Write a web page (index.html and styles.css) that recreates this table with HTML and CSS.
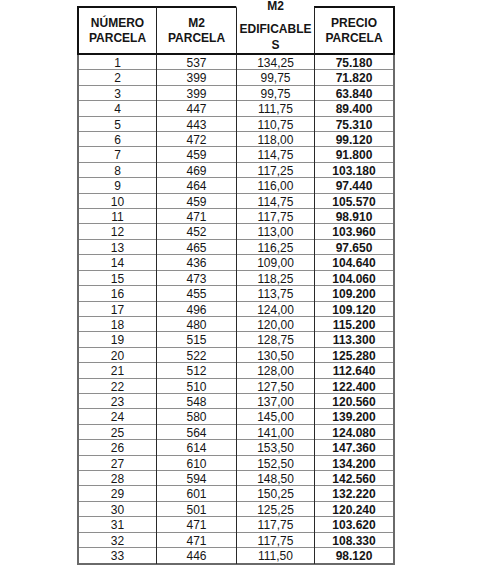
FILE: index.html
```html
<!DOCTYPE html>
<html lang="es">
<head>
<meta charset="utf-8">
<title>Parcelas</title>
<link rel="stylesheet" href="styles.css">
</head>
<body>
<div class="sheet">
  <div class="head">
    <div class="hcell c1"><span>NÚMERO</span><span>PARCELA</span></div>
    <div class="hcell c2"><span>M2</span><span>PARCELA</span></div>
    <div class="hcell c3"><span class="l1">M2</span><span class="l2">EDIFICABLE</span><span class="l3">S</span></div>
    <div class="hcell c4"><span>PRECIO</span><span>PARCELA</span></div>
  </div>
  <div class="body">
    <div class="row"><div>1</div><div>537</div><div>134,25</div><div class="b">75.180</div></div>
    <div class="row"><div>2</div><div>399</div><div>99,75</div><div class="b">71.820</div></div>
    <div class="row"><div>3</div><div>399</div><div>99,75</div><div class="b">63.840</div></div>
    <div class="row"><div>4</div><div>447</div><div>111,75</div><div class="b">89.400</div></div>
    <div class="row"><div>5</div><div>443</div><div>110,75</div><div class="b">75.310</div></div>
    <div class="row"><div>6</div><div>472</div><div>118,00</div><div class="b">99.120</div></div>
    <div class="row"><div>7</div><div>459</div><div>114,75</div><div class="b">91.800</div></div>
    <div class="row"><div>8</div><div>469</div><div>117,25</div><div class="b">103.180</div></div>
    <div class="row"><div>9</div><div>464</div><div>116,00</div><div class="b">97.440</div></div>
    <div class="row"><div>10</div><div>459</div><div>114,75</div><div class="b">105.570</div></div>
    <div class="row"><div>11</div><div>471</div><div>117,75</div><div class="b">98.910</div></div>
    <div class="row"><div>12</div><div>452</div><div>113,00</div><div class="b">103.960</div></div>
    <div class="row"><div>13</div><div>465</div><div>116,25</div><div class="b">97.650</div></div>
    <div class="row"><div>14</div><div>436</div><div>109,00</div><div class="b">104.640</div></div>
    <div class="row"><div>15</div><div>473</div><div>118,25</div><div class="b">104.060</div></div>
    <div class="row"><div>16</div><div>455</div><div>113,75</div><div class="b">109.200</div></div>
    <div class="row"><div>17</div><div>496</div><div>124,00</div><div class="b">109.120</div></div>
    <div class="row"><div>18</div><div>480</div><div>120,00</div><div class="b">115.200</div></div>
    <div class="row"><div>19</div><div>515</div><div>128,75</div><div class="b">113.300</div></div>
    <div class="row"><div>20</div><div>522</div><div>130,50</div><div class="b">125.280</div></div>
    <div class="row"><div>21</div><div>512</div><div>128,00</div><div class="b">112.640</div></div>
    <div class="row"><div>22</div><div>510</div><div>127,50</div><div class="b">122.400</div></div>
    <div class="row"><div>23</div><div>548</div><div>137,00</div><div class="b">120.560</div></div>
    <div class="row"><div>24</div><div>580</div><div>145,00</div><div class="b">139.200</div></div>
    <div class="row"><div>25</div><div>564</div><div>141,00</div><div class="b">124.080</div></div>
    <div class="row"><div>26</div><div>614</div><div>153,50</div><div class="b">147.360</div></div>
    <div class="row"><div>27</div><div>610</div><div>152,50</div><div class="b">134.200</div></div>
    <div class="row"><div>28</div><div>594</div><div>148,50</div><div class="b">142.560</div></div>
    <div class="row"><div>29</div><div>601</div><div>150,25</div><div class="b">132.220</div></div>
    <div class="row"><div>30</div><div>501</div><div>125,25</div><div class="b">120.240</div></div>
    <div class="row"><div>31</div><div>471</div><div>117,75</div><div class="b">103.620</div></div>
    <div class="row"><div>32</div><div>471</div><div>117,75</div><div class="b">108.330</div></div>
    <div class="row"><div>33</div><div>446</div><div>111,50</div><div class="b">98.120</div></div>
  </div>
</div>
</body>
</html>
```
FILE: styles.css
```css
html, body {
  margin: 0;
  padding: 0;
  background: #ffffff;
}
body {
  font-family: "Liberation Sans", Arial, sans-serif;
  color: #151515;
}
.sheet {
  width: 318px;
  margin: 6px 0 0 77px;
}
.head {
  display: grid;
  grid-template-columns: 79px 80px 78px 81px;
  height: 49px;
  box-sizing: border-box;
  border-bottom: 2px solid #111;
}
.hcell {
  display: flex;
  flex-direction: column;
  justify-content: center;
  align-items: center;
  box-sizing: border-box;
  border-top: 2px solid #111;
  font-weight: bold;
  font-size: 12px;
  line-height: 15px;
  padding-top: 1px;
}
.hcell.c1 { border-left: 2px solid #111; }
.hcell.c2, .hcell.c3, .hcell.c4 { border-left: 1px solid #222; }
.hcell.c4 { border-right: 2px solid #111; }
.hcell.c3 {
  border-top-color: transparent;
  justify-content: flex-start;
  padding-top: 0;
}
.hcell.c3 .l1 { margin-top: -9px; line-height: 15px; }
.hcell.c3 .l2 { margin-top: 8px; line-height: 15px; }
.hcell.c3 .l3 { margin-top: 1px; line-height: 15px; }
.body {
  box-sizing: border-box;
  border: 2px solid #6a6a6a;
  border-top: none;
}
.row {
  display: grid;
  grid-template-columns: 77px 80px 78px 79px;
  height: 15.42px;
  box-sizing: border-box;
  border-bottom: 1px solid #8e8e8e;
  font-size: 12px;
  line-height: 15px;
}
.row:last-child { border-bottom: none; }
.row > div {
  text-align: center;
  padding-top: 1px;
}
.row > div + div { border-left: 1px solid #2a2a2a; }
.row > .b { font-weight: bold; }
```
